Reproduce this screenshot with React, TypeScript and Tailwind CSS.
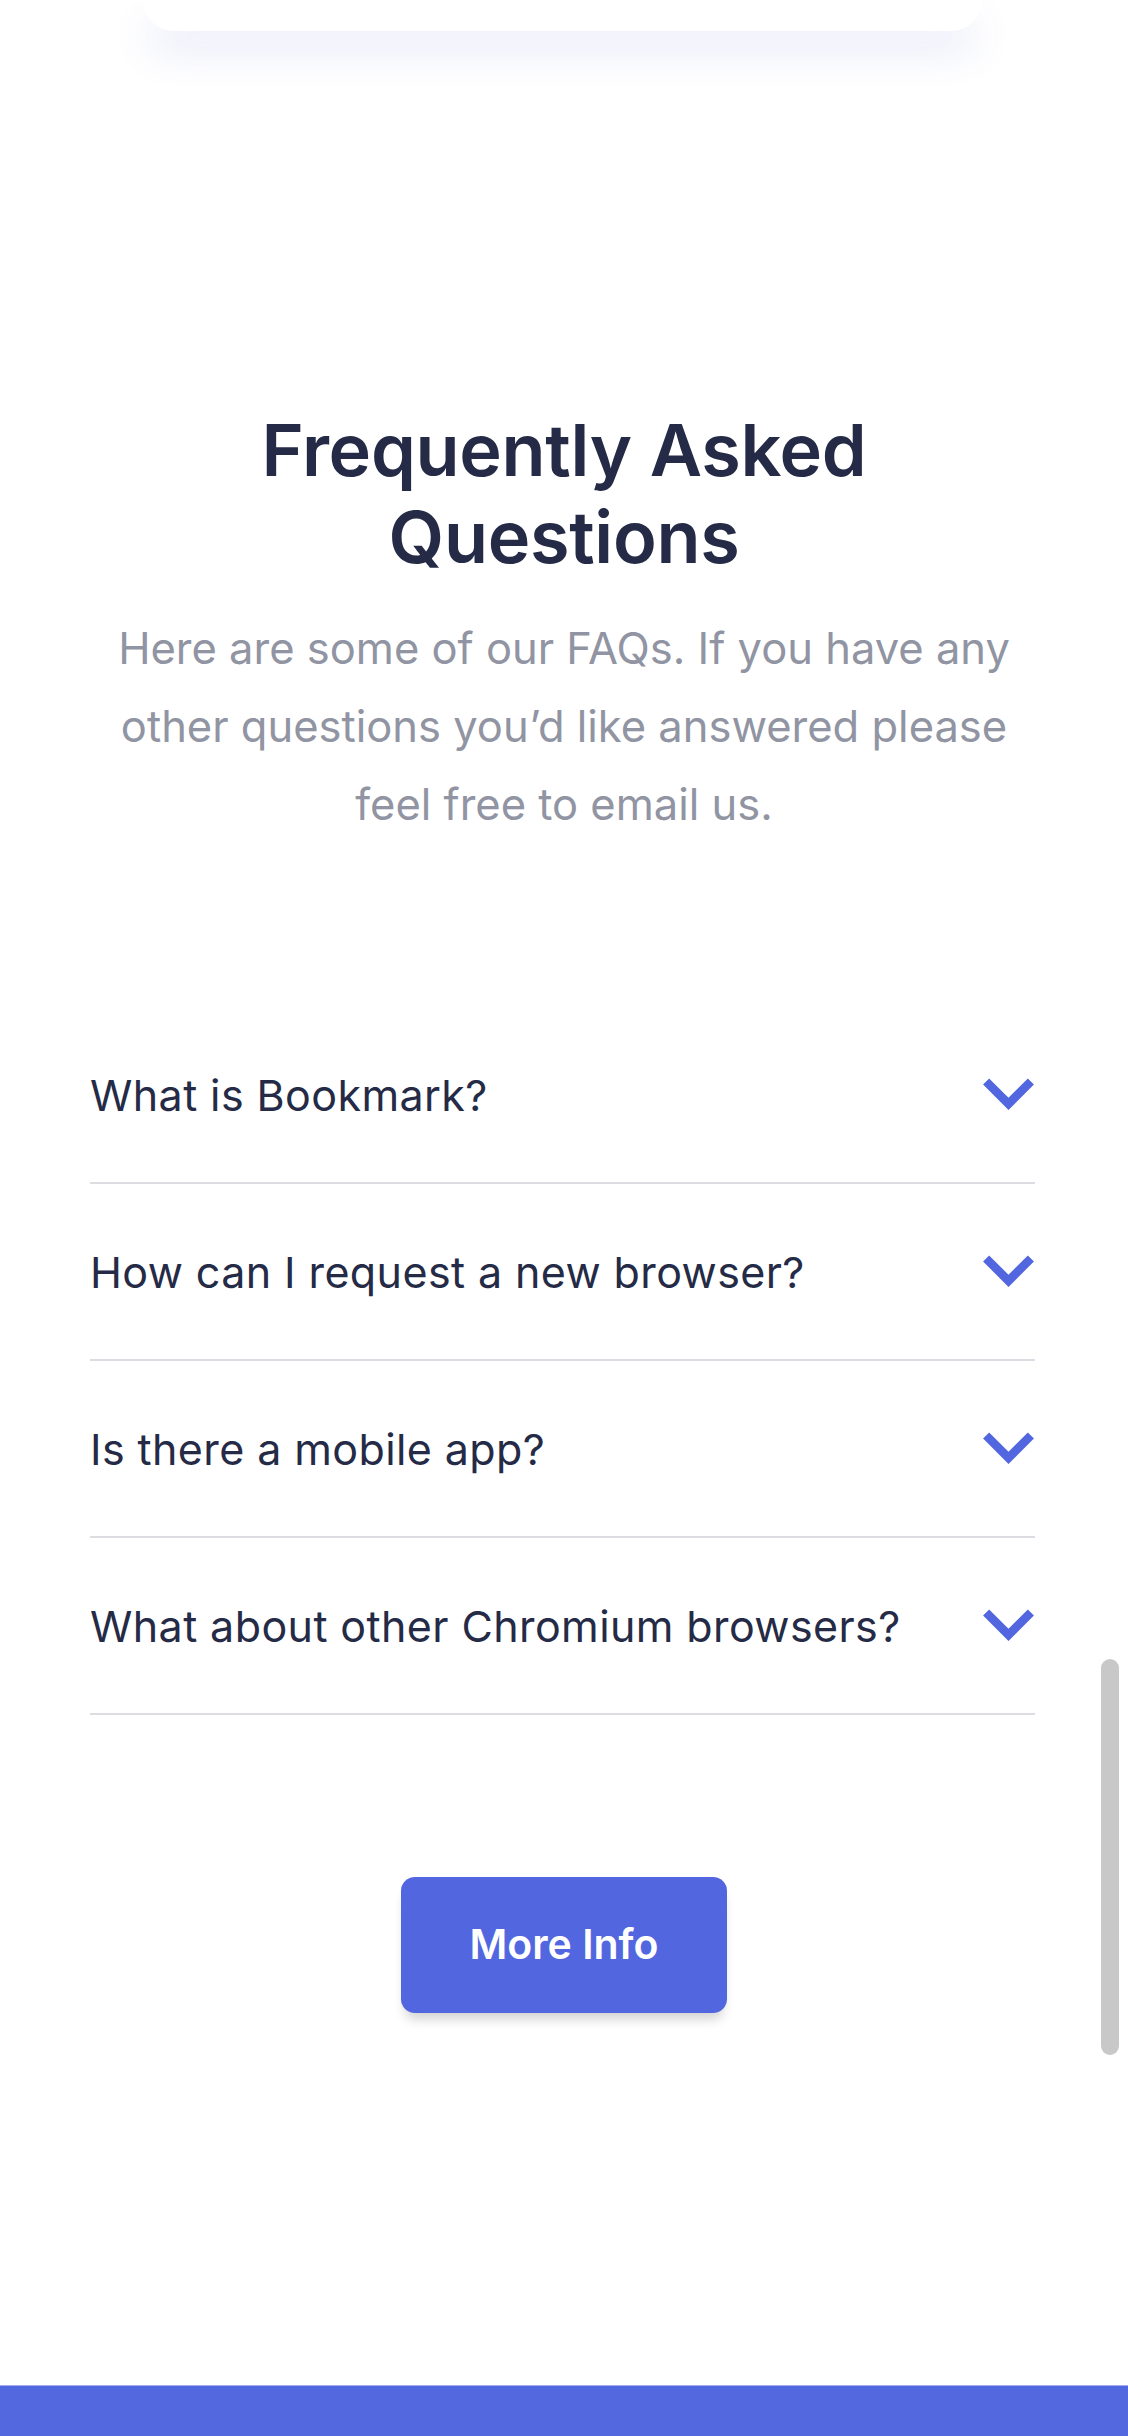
import React from "react";

const faqs = [
  "What is Bookmark?",
  "How can I request a new browser?",
  "Is there a mobile app?",
  "What about other Chromium browsers?",
];

function Chevron() {
  return (
    <svg width="53" height="33" viewBox="0 0 18 11.5" fill="none" className="shrink-0">
      <path d="M1.2 1.2l7.8 7.8 7.8-7.8" stroke="#5267df" strokeWidth="3" />
    </svg>
  );
}

export default function App() {
  return (
    <div
      className="relative w-full min-h-[2436px] bg-white overflow-hidden flex flex-col"
      style={{ fontFamily: "Inter, 'Noto Sans', sans-serif" }}
    >
      {/* top card (cut off) */}
      <div className="ml-[143px] w-[839px] h-[31px] bg-white rounded-b-[42px] shadow-[0_22px_40px_-4px_rgba(73,93,207,0.16)]" />

      {/* heading */}
      <h2 className="mt-[375px] text-center text-[72px] leading-[87px] font-semibold text-[#252b46] tracking-[-0.3px]">
        Frequently Asked
        <br />
        Questions
      </h2>
      <p className="mt-[29px] text-center text-[43.5px] leading-[78px] text-[#9194a2]">
        Here are some of our FAQs. If you have any
        <br />
        other questions you’d like answered please
        <br />
        feel free to email us.
      </p>

      {/* FAQ list */}
      <div className="mt-[164px] ml-[90px] w-[945px] flex flex-col">
        {faqs.map((q) => (
          <div
            key={q}
            className="h-[177px] flex items-center justify-between border-b-2 border-[#dcdde2]"
          >
            <span className="text-[43px] leading-[50px] tracking-[0.4px] text-[#252b46]">{q}</span>
            <Chevron />
          </div>
        ))}
      </div>

      {/* button */}
      <div className="mt-[162px] flex justify-center">
        <button className="w-[326px] h-[136px] rounded-[14px] bg-[#5267df] text-white text-[41px] font-semibold shadow-[0_10px_12px_-4px_rgba(0,0,0,0.18)]">
          More Info
        </button>
      </div>

      {/* footer band */}
      <div className="mt-[372px] h-[51px] bg-[#5368df] border-t border-[#a3acf0]" />

      {/* overlay scrollbar */}
      <div className="absolute left-[1101px] top-[1659px] w-[18px] h-[396px] rounded-full bg-[#c8c8c8]" />
    </div>
  );
}
